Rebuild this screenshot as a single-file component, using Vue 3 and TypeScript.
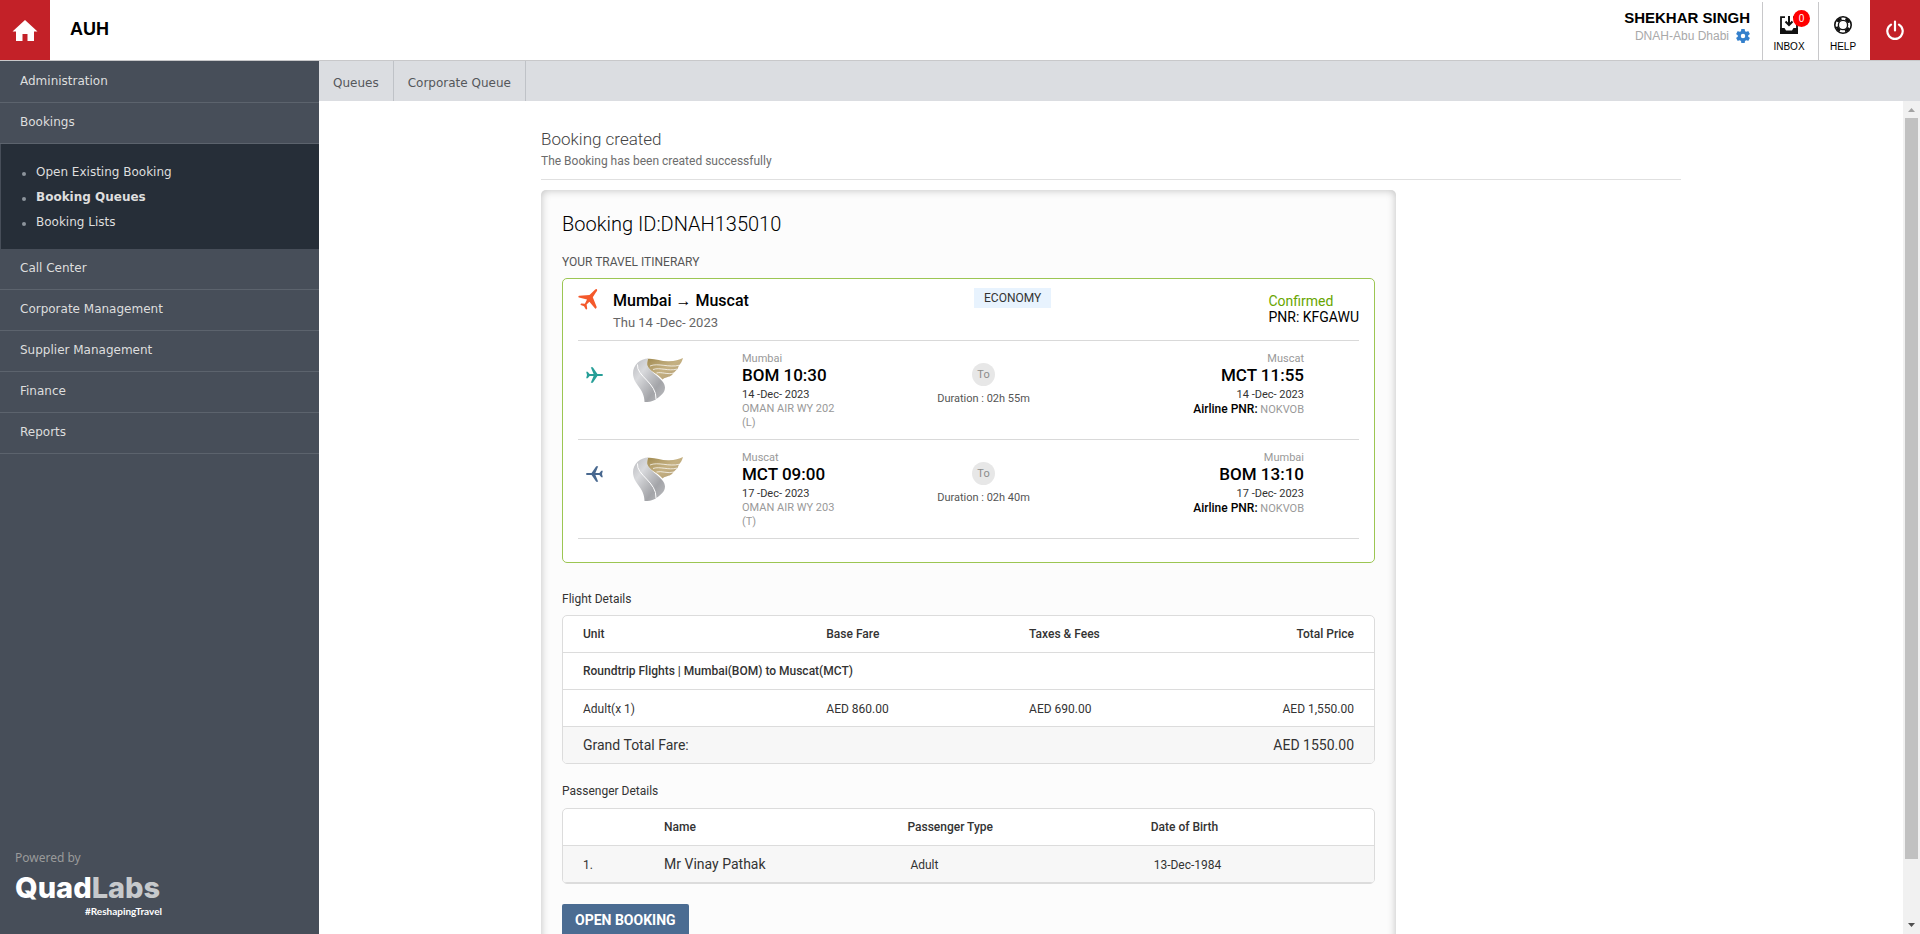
<script setup lang="ts">
interface MenuEntry { label: string; children?: { label: string; active?: boolean }[] }
interface Segment {
  from: string; depart: string; departDate: string; flight: string; cabin: string
  duration: string; to: string; arrive: string; arriveDate: string; pnr: string; returning: boolean
}

const menu: MenuEntry[] = [
  { label: 'Administration' },
  {
    label: 'Bookings',
    children: [
      { label: 'Open Existing Booking' },
      { label: 'Booking Queues', active: true },
      { label: 'Booking Lists' },
    ],
  },
  { label: 'Call Center' },
  { label: 'Corporate Management' },
  { label: 'Supplier Management' },
  { label: 'Finance' },
  { label: 'Reports' },
]

const tabs: string[] = ['Queues', 'Corporate Queue']

const segments: Segment[] = [
  {
    from: 'Mumbai', depart: 'BOM 10:30', departDate: '14 -Dec- 2023', flight: 'OMAN AIR WY 202', cabin: '(L)',
    duration: '02h 55m', to: 'Muscat', arrive: 'MCT 11:55', arriveDate: '14 -Dec- 2023', pnr: 'NOKVOB', returning: false,
  },
  {
    from: 'Muscat', depart: 'MCT 09:00', departDate: '17 -Dec- 2023', flight: 'OMAN AIR WY 203', cabin: '(T)',
    duration: '02h 40m', to: 'Mumbai', arrive: 'BOM 13:10', arriveDate: '17 -Dec- 2023', pnr: 'NOKVOB', returning: true,
  },
]
</script>

<template>
  <div class="shell">
    <header class="topbar">
      <a class="red-tile" href="#" aria-label="Home">
        <svg width="26" height="22" viewBox="0 -1 26 22" fill="#fff"><path d="M13 0 25.500 11.500H22V21h-6.500v-7h-5v7H4v-9.500H.5z" /></svg>
      </a>
      <div class="agency">AUH</div>
      <div class="user">
        <div class="user-name">SHEKHAR SINGH</div>
        <div class="user-branch">
          <span>DNAH-Abu Dhabi</span>
          <button class="bare" type="button" aria-label="Settings">
            <svg width="14" height="14" viewBox="2 2 20 20" fill="#3480cc"><path d="M19.43 12.98c.04-.32.07-.64.07-.98s-.03-.66-.07-.98l2.11-1.65c.19-.15.24-.42.12-.64l-2-3.46c-.12-.22-.39-.3-.61-.22l-2.49 1c-.52-.4-1.08-.73-1.69-.98l-.38-2.65A.49.49 0 0 0 14 2h-4c-.25 0-.46.18-.49.42l-.38 2.65c-.61.25-1.17.59-1.69.98l-2.49-1c-.23-.09-.49 0-.61.22l-2 3.46c-.13.22-.07.49.12.64l2.11 1.65c-.04.32-.07.65-.07.98s.03.66.07.98l-2.11 1.65c-.19.15-.24.42-.12.64l2 3.46c.12.22.39.3.61.22l2.49-1c.52.4 1.08.73 1.69.98l.38 2.65c.03.24.24.42.49.42h4c.25 0 .46-.18.49-.42l.38-2.65c.61-.25 1.17-.59 1.69-.98l2.49 1c.23.09.49 0 .61-.22l2-3.46c.12-.22.07-.49-.12-.64zM12 15.2a3.2 3.2 0 1 1 0-6.400 3.200 3.200 0 0 1 0 6.400z" /></svg>
          </button>
        </div>
      </div>
      <a class="tool inbox" href="#">
        <span class="tool-icon">
          <svg width="18" height="18" viewBox="0 0 18 18">
            <path d="M5 1.200H1v13M13 1.200h4v13" fill="none" stroke="#111" stroke-width="1.800" />
            <path d="M0 12h4.500l1.500 2.500h6l1.500-2.500H18v6H0z" fill="#111" />
            <path d="M9 0v8M5.500 5.500 9 9l3.500-3.500" fill="none" stroke="#111" stroke-width="2" />
          </svg>
          <b class="badge">0</b>
        </span>
        INBOX
      </a>
      <a class="tool help" href="#">
        <span class="tool-icon">
          <svg width="18" height="18" viewBox="0 0 18 18" fill="none" stroke="#111">
            <circle cx="9" cy="9" r="8.200" stroke-width="1.600" />
            <circle cx="9" cy="9" r="4.600" stroke-width="1.400" />
            <path d="M9 2.600A6.400 6.400 0 0 1 15.400 9A6.400 6.400 0 0 1 9 15.400A6.400 6.400 0 0 1 2.600 9A6.400 6.400 0 0 1 9 2.600" stroke-width="2.600" stroke-dasharray="5 5.050" stroke-dashoffset="-2.500" />
          </svg>
        </span>
        HELP
      </a>
      <button class="red-tile" type="button" aria-label="Log out">
        <svg width="18" height="21" viewBox="0 0 18 21" fill="none" stroke="#fff" stroke-width="2.200" stroke-linecap="round"><path d="M9 1.500v9M5 4.600a7.700 7.700 0 1 0 8 0" /></svg>
      </button>
    </header>

    <div class="body">
      <aside class="sidebar">
        <nav class="menu" aria-label="Main">
          <template v-for="entry in menu" :key="entry.label">
            <a class="menu-link" href="#">{{ entry.label }}</a>
            <ul v-if="entry.children" class="submenu">
              <li v-for="child in entry.children" :key="child.label">
                <a href="#" :class="{ active: child.active }">{{ child.label }}</a>
              </li>
            </ul>
          </template>
        </nav>
        <div class="powered">
          <div class="powered-label">Powered by</div>
          <div class="brand">Quad<span>Labs</span></div>
          <div class="brand-tag">#ReshapingTravel</div>
        </div>
      </aside>

      <div class="workspace">
        <nav class="tabs" aria-label="Queues">
          <a v-for="tab in tabs" :key="tab" href="#">{{ tab }}</a>
        </nav>
        <div class="viewport">
          <main class="scroll">
            <div class="container">
              <div class="intro">
                <h1>Booking created</h1>
                <p>The Booking has been created successfully</p>
              </div>

              <section class="card">
                <h2 class="booking-id">Booking ID:DNAH135010</h2>
                <h3 class="label itinerary-label">YOUR TRAVEL ITINERARY</h3>

                <div class="itinerary">
                  <div class="trip">
                    <svg class="trip-icon" width="20" height="21" viewBox="0 0 20 21" fill="#f4592b">
                      <path d="M17.200.6c.7-.8 2.300-.7 1.900.8-.2.700-.7 1.300-1.100 1.800L14.800 8.300l3.900 9.600c.2.700-.9 2.300-1.600 1.600L11.400 12.700 8.600 15.500l.6 3.900c-.2.800-1.300 1.400-1.600.6L6 17.300l-3.200-1.200c-.7-.5.200-1.500.9-1.500l3.200.1 2.100-4.300L1 8.600C0 8.300.2 6.800 1.300 6.700l10.200-.6z" />
                    </svg>
                    <div class="trip-main">
                      <div class="trip-route">Mumbai <span class="arrow">→</span> Muscat</div>
                      <div class="trip-date">Thu 14 -Dec- 2023</div>
                    </div>
                    <div class="trip-side">
                      <span class="cabin-class">ECONOMY</span>
                      <div class="trip-status">
                        <div class="confirmed">Confirmed</div>
                        <div>PNR: KFGAWU</div>
                      </div>
                    </div>
                  </div>

                  <article v-for="seg in segments" :key="seg.depart" class="segment">
                    <div class="carrier">
                      <svg class="plane" :class="{ returning: seg.returning }" width="17" height="16" viewBox="0 0 17 16">
                        <path d="M.2 4.800h1.500L3.600 7h4L4.800.2h2L11.400 7h4.200c1.800 0 1.800 2 0 2h-4.200l-4.600 6.800h-2L7.600 9h-4l-1.900 2.200H.2L1 8z" />
                      </svg>
                      <svg class="airline" width="50" height="44" viewBox="0 0 50 44" role="img" aria-label="Oman Air">
                        <defs>
                          <linearGradient id="silver" x1="0" y1="0" x2="1" y2="1"><stop offset="0" stop-color="#b9babe" /><stop offset=".3" stop-color="#d9dadd" /><stop offset=".7" stop-color="#a3a4a8" /><stop offset="1" stop-color="#bcbdc0" /></linearGradient>
                          <linearGradient id="gold" x1="0" y1="0" x2="1" y2="1"><stop offset="0" stop-color="#a08a50" /><stop offset=".5" stop-color="#c5b183" /><stop offset="1" stop-color="#b09a72" /></linearGradient>
                        </defs>
                        <path d="M14.500.8C22 0 28 3.500 36 3.200 42 3 46 2 50 0c-1 3.500-2 5-4 7.500L44.500 11 41 14.500 39 17c-3 2.500-7 2-9.500 4.500C24 15 16 13 14 7.500z" fill="url(#gold)" />
                        <path d="M17 8c8-3.500 19 2 29.500-.8M20 11.500c7-2.500 15 2 24-.4M23.500 15c5-1.500 11 2 17.500 0" fill="none" stroke="#fff" stroke-opacity=".8" stroke-width=".9" />
                        <path d="M15.500.4C7 .4 0 7 0 15c0 12 11.500 15 11.500 29 5 .2 9-.6 12.500-3.500 4-2.800 8-6 8-11C32 20 14 14 14 5c0-2 .5-3.500 1.500-4.600z" fill="url(#silver)" />
                        <path d="M4.500 6.500C3 18 24 25 23 41" fill="none" stroke="#fff" stroke-width="1" />
                      </svg>
                    </div>
                    <div class="stop">
                      <div class="city">{{ seg.from }}</div>
                      <div class="time">{{ seg.depart }}</div>
                      <div class="date">{{ seg.departDate }}</div>
                      <div class="muted">{{ seg.flight }}<br>{{ seg.cabin }}</div>
                    </div>
                    <div class="leg">
                      <span class="to">To</span>
                      <div>Duration : {{ seg.duration }}</div>
                    </div>
                    <div class="stop arrival">
                      <div class="city">{{ seg.to }}</div>
                      <div class="time">{{ seg.arrive }}</div>
                      <div class="date">{{ seg.arriveDate }}</div>
                      <div class="muted"><b>Airline PNR:</b> {{ seg.pnr }}</div>
                    </div>
                  </article>
                </div>

                <h3 id="fares" class="label fares-label">Flight Details</h3>
                <table class="grid fares" aria-labelledby="fares">
                  <colgroup><col class="w30"><col class="w25"><col class="w25"><col></colgroup>
                  <thead>
                    <tr><th scope="col">Unit</th><th scope="col">Base Fare</th><th scope="col">Taxes &amp; Fees</th><th scope="col">Total Price</th></tr>
                  </thead>
                  <tbody>
                    <tr><th colspan="4" scope="rowgroup">Roundtrip Flights | Mumbai(BOM) to Muscat(MCT)</th></tr>
                    <tr class="low"><td>Adult(x 1)</td><td>AED 860.00</td><td>AED 690.00</td><td>AED 1,550.00</td></tr>
                  </tbody>
                  <tfoot>
                    <tr class="shade"><th colspan="3" scope="row">Grand Total Fare:</th><td>AED 1550.00</td></tr>
                  </tfoot>
                </table>

                <h3 id="passengers" class="label passengers-label">Passenger Details</h3>
                <table class="grid passengers" aria-labelledby="passengers">
                  <colgroup><col class="w10"><col class="w30"><col class="w30"><col></colgroup>
                  <thead>
                    <tr><td></td><th scope="col">Name</th><th scope="col">Passenger Type</th><th scope="col">Date of Birth</th></tr>
                  </thead>
                  <tbody>
                    <tr class="shade low"><td>1.</td><td class="person">Mr Vinay Pathak</td><td class="inset">Adult</td><td class="inset">13-Dec-1984</td></tr>
                  </tbody>
                </table>

                <button class="open-booking" type="button">OPEN BOOKING</button>
              </section>
            </div>
          </main>
          <div class="scrollbar" aria-hidden="true">
            <svg width="17" height="17" viewBox="0 0 17 17" fill="#a3a3a3"><path d="M5 11h7L8.500 7z" /></svg>
            <div class="track"><div class="thumb"></div></div>
            <svg width="17" height="17" viewBox="0 0 17 17" fill="#505050"><path d="M5 6h7l-3.500 4z" /></svg>
          </div>
        </div>
      </div>
    </div>
  </div>
</template>

<style>
html, body { margin: 0; height: 100%; overflow: hidden; }
</style>

<style scoped>
.shell { display: flex; flex-direction: column; height: 100vh; background: #fff; color: #333; font-family: Roboto, "Liberation Sans", sans-serif; font-size: 12px; }
.shell *, .shell *::before { box-sizing: border-box; }
a { color: inherit; text-decoration: none; }
h1, h2, h3, p { margin: 0; font-weight: 400; }
button { font-family: inherit; border: 0; cursor: pointer; }
svg { display: block; }

.topbar { display: flex; flex: none; height: 61px; border-bottom: 1px solid #c8c8ca; color: #000; font-family: "Liberation Sans", Arial, sans-serif; }
.red-tile { display: flex; flex: none; align-items: center; justify-content: center; width: 50px; height: 60px; padding: 0; background: #c32128; }
.agency { flex: 1; padding: 17px 20px; font-size: 18px; line-height: 24px; font-weight: 700; }
.user { padding: 9px 12px 0 0; text-align: right; }
.user-name { font-size: 15px; line-height: 18px; font-weight: 700; }
.user-branch { display: flex; align-items: center; justify-content: flex-end; gap: 7px; color: #a9a9a9; font-size: 12px; line-height: 18px; }
.bare { padding: 0; background: none; }
.tool { display: flex; flex-direction: column; align-items: center; margin-top: 2px; padding: 14px 3px 0 0; border-left: 1px solid #c8c8ca; font-size: 10px; line-height: 12px; }
.tool-icon { position: relative; margin-bottom: 7px; }
.inbox { width: 56px; }
.help { width: 52px; }
.badge { position: absolute; top: -6px; left: 13px; width: 17px; height: 17px; border-radius: 50%; background: #f00; color: #fff; text-align: center; line-height: 17px; font-weight: 400; }

.body { display: flex; flex: 1; min-height: 0; }
.sidebar { display: flex; flex: none; flex-direction: column; justify-content: space-between; width: 319px; background: #474e59; color: #dedede; font-family: "DejaVu Sans", Verdana, sans-serif; }
.menu { padding-top: 1px; }
.menu-link { display: block; height: 41px; padding-left: 20px; border-bottom: 1px solid #5c636d; line-height: 38px; }
.submenu { margin: 0 0 0 1px; padding: 16px 0 14px; background: #262e38; list-style: none; line-height: 25px; }
.submenu li { display: flex; align-items: center; }
.submenu li::before { content: ""; width: 4px; height: 4px; margin: 2px 10px 0 21px; border-radius: 50%; background: #8d949c; }
.submenu .active { font-weight: 700; }
.powered { width: 177px; padding: 0 15px 17px; }
.powered-label { color: #9a9b9b; font-family: "Noto Sans", sans-serif; line-height: 18px; }
.brand { padding-top: 3px; color: #fff; font-family: Inter, sans-serif; font-size: 29px; line-height: 35px; font-weight: 800; }
.brand span { color: #c6c9cc; }
.brand-tag { color: #fff; font-family: Lato, sans-serif; font-size: 10px; line-height: 12px; font-weight: 700; text-align: right; }

.workspace { display: flex; flex: 1; flex-direction: column; min-width: 0; }
.tabs { display: flex; flex: none; height: 40px; background: #dbdde1; color: #55575b; font-family: "DejaVu Sans", Verdana, sans-serif; }
.tabs a { padding: 2px 14px; border-right: 1px solid #bfc2c7; line-height: 40px; }
.viewport { display: flex; flex: 1; min-height: 0; }
.scroll { flex: 1; overflow-y: auto; scrollbar-width: none; }
.scrollbar { display: flex; flex: none; flex-direction: column; width: 17px; background: #f1f1f1; }
.track { flex: 1; padding: 0 2px; }
.thumb { height: 97%; max-height: 741px; background: #c1c1c1; }

.container { max-width: 1140px; margin: 0 auto; padding: 26px 0 20px; }
.intro { margin-bottom: 10px; padding-bottom: 8px; border-bottom: 1px solid #e0e0e0; color: #6d6d6d; }
.intro h1 { color: #444; font-size: 17px; line-height: 24px; font-weight: 300; }
.intro p { line-height: 20px; }

.card { width: 75%; padding: 22px 21px; border-radius: 5px; background: #fcfcfc; box-shadow: inset 0 0 8px rgba(0, 0, 0, .25); }
.booking-id { color: #000; font-size: 20px; line-height: 24px; font-weight: 300; }
.label { font-size: 12px; line-height: 20px; }
.itinerary-label { margin: 16px 0 6px; color: #555; }
.fares-label { margin: 26px 0 6px; }
.passengers-label { margin: 17px 0 7px; }

.itinerary { padding: 0 15px 23px; border: 1px solid #9cc653; border-radius: 5px; background: #fff; }
.trip { display: grid; grid-template-columns: 35px 361fr 385fr; padding: 9px 0 7px; border-bottom: 1px solid #d9d9d9; }
.trip-icon { margin-top: 1px; }
.trip-main { padding-top: 1px; }
.trip-route { color: #000; font-size: 16px; line-height: 24px; font-weight: 500; }
.arrow { font-family: "Liberation Sans", sans-serif; font-weight: 400; }
.trip-date { color: #666; font-size: 13px; line-height: 20px; }
.trip-side { display: flex; align-items: flex-start; justify-content: space-between; }
.cabin-class { padding: 0 10px; background: #e8f3fe; line-height: 20px; }
.trip-status { padding-top: 5px; color: #000; font-size: 14px; line-height: 16px; }
.confirmed { color: #67a500; }

.segment { display: grid; grid-template-columns: 164fr 161fr 161fr 240fr 55fr; padding: 11px 0 9px; border-bottom: 1px solid #d9d9d9; font-size: 11px; line-height: 14px; }
.carrier { display: flex; align-items: flex-start; gap: 30px; padding: 6px 0 0 8px; }
.plane { margin-top: 9px; fill: #279f98; }
.plane.returning { fill: #48688f; transform: scaleX(-1); }
.city, .muted { color: #999; }
.time { margin-bottom: 4px; color: #000; font-size: 17px; line-height: 18px; font-weight: 500; }
.muted b { color: #000; font-size: 12px; font-weight: 500; }
.arrival { text-align: right; }
.leg { display: flex; flex-direction: column; align-items: center; gap: 6px; padding-top: 11px; color: #555; }
.to { width: 23px; height: 23px; border-radius: 50%; background: #e7e7e7; color: #8c8c8c; line-height: 23px; text-align: center; }

.grid { width: 100%; table-layout: fixed; border: 1px solid #dcdcdc; border-radius: 5px; border-spacing: 0; background: #fff; overflow: hidden; }
.grid th, .grid td { height: 37px; padding: 0 20px; border-bottom: 1px solid #dcdcdc; line-height: 16px; text-align: left; }
.grid th { font-weight: 500; }
.grid .low td { padding-top: 2px; }
.grid .shade { background: #f7f7f7; }
.w10 { width: 10%; }
.w25 { width: 25%; }
.w30 { width: 30%; }
.fares th:nth-child(4), .fares td:last-child { text-align: right; }
.fares tfoot th, .fares tfoot td { height: 36px; padding-bottom: 1px; border-bottom: 0; font-size: 14px; font-weight: 400; }
.passengers .low .person { padding-top: 0; font-size: 14px; }
.passengers .low .inset { padding-left: 23px; }
.open-booking { margin-top: 20px; padding: 0 13px; border-radius: 2px; background: #4b6c92; color: #fff; font-size: 14px; line-height: 32px; font-weight: 700; }
</style>
